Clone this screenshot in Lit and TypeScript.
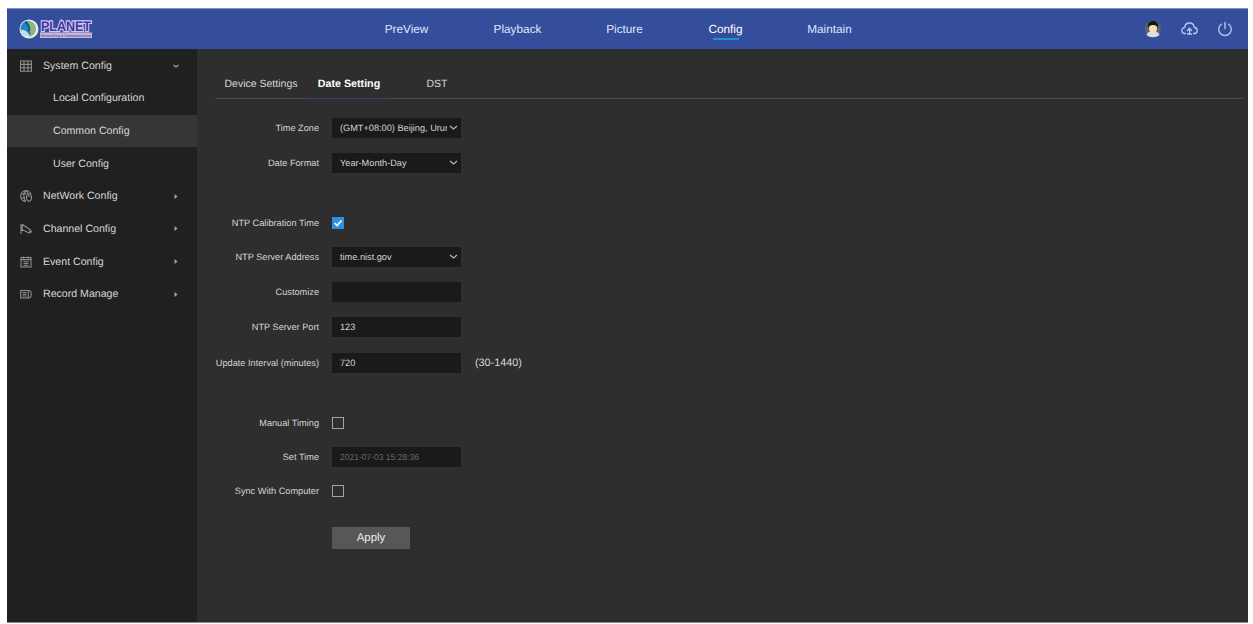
import { LitElement, html, svg, css } from "lit";
import { customElement } from "lit/decorators.js";
import { classMap } from "lit/directives/class-map.js";

const NAV = [
  { label: "PreView", cls: "n1" },
  { label: "Playback", cls: "n2" },
  { label: "Picture", cls: "n3" },
  { label: "Config", cls: "n4", active: true },
  { label: "Maintain", cls: "n5" },
];

const ICONS: Record<string, unknown> = {
  system: svg`<rect x=".5" y="1" width="11" height="3.4"/><rect x=".5" y="4.4" width="11" height="3.4"/><path d="M.5 7.8v3.4h11V7.8M4 1v10M8 1v10"/>`,
  network: svg`<path d="M11.2 4.5A5.4 5.4 0 1 0 6 11.4M1 4h10M1.2 8h4M6 .7C3 3 3 8.500 6 11.400M6 .7c2 1.300 2.600 3 2.600 4.300"/><path d="M6.500 6h5v2.600c0 1.400-1.200 2.200-2.500 2.800-1.300-.6-2.500-1.400-2.500-2.800z"/>`,
  channel: svg`<path d="M1 1v10M1 7.500h3.500M2.500 1.500l8 5.500-1.500 3-7-3.500zM10 7.500l1.500 1-1 1.500"/>`,
  event: svg`<rect x="1" y="1.500" width="10" height="9.500"/><path d="M1 3.600h10M3.500.5v2M8.500.5v2M3.500 5.800h5M3.500 7.500h5M3.500 9.200h5"/>`,
  record: svg`<rect x=".7" y="2.500" width="7.600" height="7.500"/><path d="M8.300 2.500c2 0 3 1.500 3 3.700s-1 3.800-3 3.800M2.500 4.500h4M2.500 6.200h4M2.500 8h4"/>`,
};

const MENU = [
  { label: "System Config", icon: "system", open: true },
  { label: "Local Configuration", sub: true },
  { label: "Common Config", sub: true, active: true },
  { label: "User Config", sub: true },
  { label: "NetWork Config", icon: "network" },
  { label: "Channel Config", icon: "channel" },
  { label: "Event Config", icon: "event" },
  { label: "Record Manage", icon: "record" },
];

type Row = { label: string; kind: "select" | "text" | "check"; value?: string; on?: boolean; off?: boolean; note?: string };

const GROUPS: Row[][] = [
  [
    { label: "Time Zone", kind: "select", value: "(GMT+08:00) Beijing, Urumqi" },
    { label: "Date Format", kind: "select", value: "Year-Month-Day" },
  ],
  [
    { label: "NTP Calibration Time", kind: "check", on: true },
    { label: "NTP Server Address", kind: "select", value: "time.nist.gov" },
    { label: "Customize", kind: "text", value: "" },
    { label: "NTP Server Port", kind: "text", value: "123" },
    { label: "Update Interval (minutes)", kind: "text", value: "720", note: "(30-1440)" },
  ],
  [
    { label: "Manual Timing", kind: "check" },
    { label: "Set Time", kind: "text", value: "2021-07-03 15:28:36", off: true },
    { label: "Sync With Computer", kind: "check" },
  ],
];

@customElement("app-root")
export class AppRoot extends LitElement {
  static styles = css`
    :host {
      display: block;
      box-sizing: border-box;
      width: 100%;
      height: 624px;
      padding: 8px 5px 1px 7px;
      background: #fff;
      overflow: hidden;
      font-family: "Liberation Sans", Arial, sans-serif;
      text-rendering: geometricPrecision;
      color: #d6d6d6;
      white-space: nowrap;
    }
    * { box-sizing: border-box; }
    svg { display: block; fill: none; flex: none; }
    .frame { height: 615px; display: flex; flex-direction: column; background: #2e2e2e; border-bottom: 1px solid #8a8a8a; }
    .top { height: 41px; flex: none; display: flex; align-items: center; background: #354e9b; border-top: 1px solid #8490bb; }
    .logo { margin-left: 12px; width: 366px; }
    .wordmark { font: bold 14px "Liberation Sans", Arial, sans-serif; }
    .tagline { font: bold 4px "Liberation Sans", Arial, sans-serif; }
    .nav { display: flex; flex: 1; height: 40px; align-items: center; font-size: 11.8px; color: #dfe6fb; }
    .item { height: 40px; padding-top: 13px; line-height: 14px; flex: none; display: flex; flex-direction: column; align-items: center; }
    .n1 { width: 43px; margin-right: 66px; }
    .n2 { width: 47px; margin-right: 65px; }
    .n3 { width: 37px; margin-right: 65px; }
    .n4 { width: 35px; margin-right: 64px; color: #fff; }
    .n5 { width: 45px; }
    .bar { width: 26px; height: 2px; margin-top: 2px; background: #1f8fd8; }
    .tools { display: flex; align-items: center; gap: 19px; margin-right: 15px; }
    .body { flex: 1; display: flex; min-height: 0; }
    .side { width: 190px; flex: none; padding-top: 0.2px; background: #202020; font-size: 10.6px; }
    .entry { height: 32.7px; display: flex; align-items: center; padding: 0 17px 0 13px; }
    .entry svg { stroke: #8e8e8e; stroke-width: 1.1; }
    .name { flex: 1; margin-left: 11px; }
    .sub { padding-left: 35px; }
    .active { background: #363636; }
    .entry .arrow { stroke: #a8a8a8; stroke-width: 1.2; }
    .entry .tri { fill: #a8a8a8; stroke: none; }
    .main { flex: 1; padding: 21px 5px 0 18px; }
    .tabs { height: 29px; display: flex; border-bottom: 1px solid #4c4c50; font-size: 10.5px; line-height: 14px; }
    .tab { height: 29px; padding-top: 7px; text-align: center; }
    .t1 { width: 93px; padding-right: 1px; }
    .t2 { width: 82px; font-weight: bold; font-size: 10.7px; color: #fff; border-bottom: 1px solid #3c3c86; }
    .t3 { width: 87px; padding-left: 7px; }
    .form { padding-top: 11px; font-size: 9.2px; }
    .group { margin-bottom: 27.1px; }
    .row { height: 35.2px; display: flex; align-items: center; }
    .short { height: 32px; }
    .label { width: 104px; display: flex; justify-content: flex-end; margin-right: 13px; }
    .field { width: 129px; height: 20px; padding: 0 3px 0 8px; background: #1a1a1a; display: flex; align-items: center; }
    .value { width: 107px; overflow: hidden; margin-right: 2px; }
    .off { color: #6a6a6a; font-size: 8.5px; }
    .field svg { stroke: #bdbdbd; stroke-width: 1.1; }
    .note { font-size: 10.8px; margin-left: 14px; }
    .box { width: 12px; height: 12px; border: 1px solid #a4a4a4; }
    .on { border-color: #2f8fe0; background: #2f8fe0; }
    .on svg { stroke: #fff; stroke-width: 1.5; }
    .apply { width: 78px; height: 22px; margin: -7px 0 0 117px; display: block; padding: 0; border: 0; border-radius: 1px; background: #575757; color: #eee; font: 11.4px "Liberation Sans", Arial, sans-serif; text-rendering: geometricPrecision; }
  `;

  private logo() {
    return svg`<svg width="76" height="24" viewBox="0 0 76 24">
      <circle cx="10" cy="12" r="9.500" fill="#e4edf0"/>
      <circle cx="9" cy="11.500" r="7.500" fill="#2588b8"/>
      <path d="M9 4c5 1 8 4 8 8s-3 7-7 8c3-4 1-7-1-8z" fill="#8fb878"/>
      <path d="M2 13c3-1 6 1 9 6-5 1-8-2-9-6z" fill="#c4e2ea"/>
      <path d="M6 5c3 1 5 5 4 9" stroke="#15548c" stroke-width="2"/>
      <text class="wordmark" x="22" y="14" textLength="50" lengthAdjust="spacingAndGlyphs" fill="#4335a0" stroke="#d0c9f2" stroke-width="2.400" paint-order="stroke">PLANET</text>
      <rect x="21" y="15.500" width="52" height="5.500" fill="#c2bcdc"/>
      <text class="tagline" x="22" y="19.700" textLength="50" lengthAdjust="spacingAndGlyphs" fill="#83568e">Networking &amp; Communication</text>
    </svg>`;
  }

  private control(r: Row) {
    if (r.kind === "check") {
      return html`<span class=${classMap({ box: true, on: !!r.on })}>
        ${r.on ? html`<svg width="10" height="10" viewBox="0 0 9 9"><path d="M1.500 4.500l2.200 2.200 4-4.500" /></svg>` : ""}
      </span>`;
    }
    return html`<span class=${classMap({ field: true, off: !!r.off })}><span class="value">${r.value}</span>${r.kind === "select"
        ? html`<svg width="9" height="6" viewBox="0 0 9 6"><path d="M1 1l3.500 3L8 1" /></svg>`
        : ""}</span>${r.note ? html`<span class="note">${r.note}</span>` : ""}`;
  }

  render() {
    return html`<div class="frame">
      <header class="top">
        <div class="logo">${this.logo()}</div>
        <nav class="nav">
          ${NAV.map((n) => html`<div class="item ${n.cls}"><span>${n.label}</span>${n.active ? html`<span class="bar"></span>` : ""}</div>`)}
        </nav>
        <div class="tools">
          <svg width="18" height="18" viewBox="0 0 18 18">
            <circle cx="9" cy="9" r="8" fill="#5d6570" />
            <path d="M2.500 15c1-3 3-3.500 6.500-3.500s5.500.5 6.500 3.500c-3 3-10 3-13 0z" fill="#d8dfe4" />
            <ellipse cx="9" cy="8.500" rx="4" ry="5" fill="#f2dfb8" />
            <path d="M4 8c-1-5 2-7 5-7s6 2 5 7c-1-2-2-3-5-3s-4 1-5 3z" fill="#17150f" />
          </svg>
          <svg width="17" height="16" viewBox="0 0 17 16" stroke="#b4caf4" stroke-width="1.300">
            <path d="M5 12.500H4a3 3 0 0 1-.3-6C4 3.500 6 2 8.500 2s4.500 1.500 4.800 4.500a3 3 0 0 1-.3 6h-1M8.500 13V7.500M6 10l2.500-2.700L11 10M6 13h5" />
          </svg>
          <svg width="16" height="16" viewBox="0 0 16 16" stroke="#a9c0ef" stroke-width="1.500">
            <path d="M4.800 2.800a6.300 6.300 0 1 0 6.400 0M8 1v7" />
          </svg>
        </div>
      </header>
      <div class="body">
        <aside class="side">
          ${MENU.map((m) => m.sub
            ? html`<div class=${classMap({ entry: true, sub: true, active: !!m.active })}><span class="name">${m.label}</span></div>`
            : html`<div class="entry">
                <svg width="12" height="12" viewBox="0 0 12 12">${ICONS[m.icon!]}</svg>
                <span class="name">${m.label}</span>
                ${m.open
                  ? html`<svg class="arrow" width="8" height="6" viewBox="0 0 8 6"><path d="M1.500 2L4 4l2.500-2" /></svg>`
                  : html`<svg class="tri" width="8" height="7" viewBox="0 0 8 7"><path d="M2.500 1l3 2.500-3 2.500z" /></svg>`}
              </div>`)}
        </aside>
        <main class="main">
          <div class="tabs">
            <div class="tab t1">Device Settings</div>
            <div class="tab t2">Date Setting</div>
            <div class="tab t3">DST</div>
          </div>
          <div class="form">
            ${GROUPS.map((g) => html`<section class="group">
              ${g.map((r) => html`<div class=${classMap({ row: true, short: r.kind === "check" })}>
                <span class="label">${r.label}</span>${this.control(r)}
              </div>`)}
            </section>`)}
            <button class="apply">Apply</button>
          </div>
        </main>
      </div>
    </div>`;
  }
}
